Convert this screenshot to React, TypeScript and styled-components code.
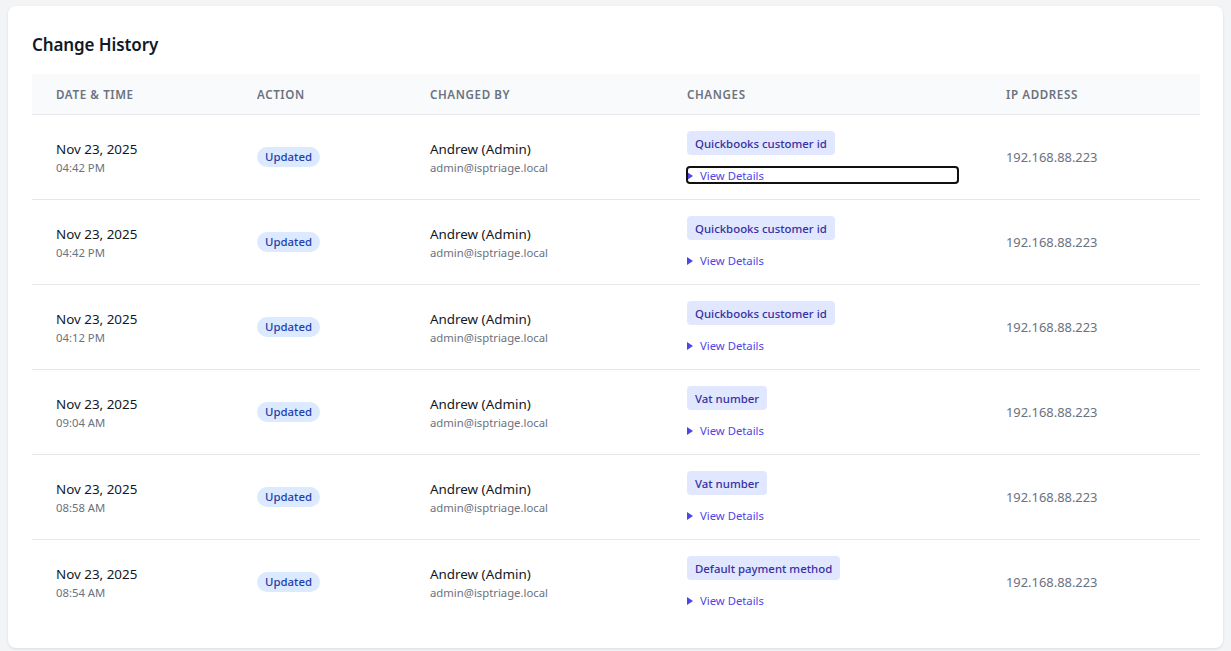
import { createGlobalStyle, styled } from "styled-components";

const GlobalStyle = createGlobalStyle`
    html, body {
        margin: 0;
        padding: 0;
        height: 100%;
        background: #f3f4f6;
        overflow: hidden;
    }
    body {
        font-family: "Noto Sans", "Open Sans", Arial, sans-serif;
    }
`;

const Page = styled.div`
    padding: 6px 8px 3px;
    box-sizing: border-box;
    height: 651px;
`;

const Card = styled.section`
    background: #ffffff;
    border-radius: 8px;
    box-shadow: 0 1px 3px rgba(0, 0, 0, 0.1);
    padding: 24px;
    height: 642px;
    box-sizing: border-box;
`;

const Title = styled.h2`
    margin: 0 0 16px;
    height: 28px;
    font-size: 17px;
    line-height: 29px;
    font-weight: 600;
    letter-spacing: -0.1px;
    color: #111827;
`;

const Table = styled.table`
    width: 1168px;
    table-layout: fixed;
    border-collapse: collapse;
`;

const HeadRow = styled.tr`
    background: #f9fafb;
    border-bottom: 1px solid #e5e7eb;
`;

const HeadCell = styled.th<{ $width: number }>`
    width: ${(props) => props.$width}px;
    height: 40px;
    box-sizing: border-box;
    padding: 1px 24px 0;
    text-align: left;
    font-size: 11.6px;
    font-weight: 600;
    letter-spacing: 0.6px;
    text-transform: uppercase;
    color: #6b7280;
`;

const Row = styled.tr`
    border-bottom: 1px solid #e5e7eb;
    &:last-child {
        border-bottom: none;
    }
`;

const Cell = styled.td`
    height: 85px;
    box-sizing: border-box;
    padding: 0 24px;
    vertical-align: middle;
`;

const PrimaryText = styled.div`
    font-size: 13.4px;
    line-height: 20px;
    padding-top: 2px;
    color: #111827;
`;

const SecondaryText = styled.div`
    font-size: 11.3px;
    line-height: 16px;
    margin-top: 1px;
    color: #6b7280;
`;

const ActionBadge = styled.span`
    display: block;
    width: fit-content;
    padding: 0 8px;
    height: 20px;
    line-height: 20px;
    border-radius: 10px;
    background: #dbeafe;
    color: #1e40af;
    font-size: 11.4px;
    font-weight: 500;
`;

const FieldTag = styled.span`
    display: block;
    width: fit-content;
    padding: 0 8px;
    height: 24px;
    line-height: 26px;
    border-radius: 4px;
    background: #e0e7ff;
    color: #3730a3;
    font-size: 11.4px;
    font-weight: 500;
`;

const Details = styled.details`
    margin-top: 12px;
`;

const Summary = styled.summary<{ $focused?: boolean }>`
    display: block;
    height: 16px;
    line-height: 18px;
    font-size: 11.3px;
    color: #4f46e5;
    cursor: pointer;
    border-radius: 3px;
    outline: ${(props) => (props.$focused ? "2px solid #101010" : "none")};
    outline-offset: -1px;
`;

const Arrow = styled.svg`
    display: inline-block;
    width: 6px;
    height: 8px;
    margin-right: 7px;
    fill: #4f46e5;
`;

const IpText = styled.span`
    display: block;
    font-size: 12.9px;
    line-height: 20px;
    color: #6b7280;
`;

interface HistoryEntry {
    time: string;
    field: string;
}

const entries: HistoryEntry[] = [
    { time: "04:42 PM", field: "Quickbooks customer id" },
    { time: "04:42 PM", field: "Quickbooks customer id" },
    { time: "04:12 PM", field: "Quickbooks customer id" },
    { time: "09:04 AM", field: "Vat number" },
    { time: "08:58 AM", field: "Vat number" },
    { time: "08:54 AM", field: "Default payment method" },
];

const columns = [
    { label: "Date & Time", width: 201 },
    { label: "Action", width: 173 },
    { label: "Changed By", width: 257 },
    { label: "Changes", width: 319 },
    { label: "IP Address", width: 218 },
];

export default function App() {
    return (
        <Page>
            <GlobalStyle />
            <Card>
                <Title>Change History</Title>
                <Table>
                    <thead>
                        <HeadRow>
                            {columns.map((column) => (
                                <HeadCell key={column.label} $width={column.width}>
                                    {column.label}
                                </HeadCell>
                            ))}
                        </HeadRow>
                    </thead>
                    <tbody>
                        {entries.map((entry, index) => (
                            <Row key={index}>
                                <Cell>
                                    <PrimaryText>Nov 23, 2025</PrimaryText>
                                    <SecondaryText>{entry.time}</SecondaryText>
                                </Cell>
                                <Cell>
                                    <ActionBadge>Updated</ActionBadge>
                                </Cell>
                                <Cell>
                                    <PrimaryText>Andrew (Admin)</PrimaryText>
                                    <SecondaryText>admin@isptriage.local</SecondaryText>
                                </Cell>
                                <Cell>
                                    <FieldTag>{entry.field}</FieldTag>
                                    <Details>
                                        <Summary $focused={index === 0}>
                                            <Arrow viewBox="0 0 6 8">
                                                <path d="M0 0L6 4L0 8Z" />
                                            </Arrow>
                                            View Details
                                        </Summary>
                                    </Details>
                                </Cell>
                                <Cell>
                                    <IpText>192.168.88.223</IpText>
                                </Cell>
                            </Row>
                        ))}
                    </tbody>
                </Table>
            </Card>
        </Page>
    );
}
